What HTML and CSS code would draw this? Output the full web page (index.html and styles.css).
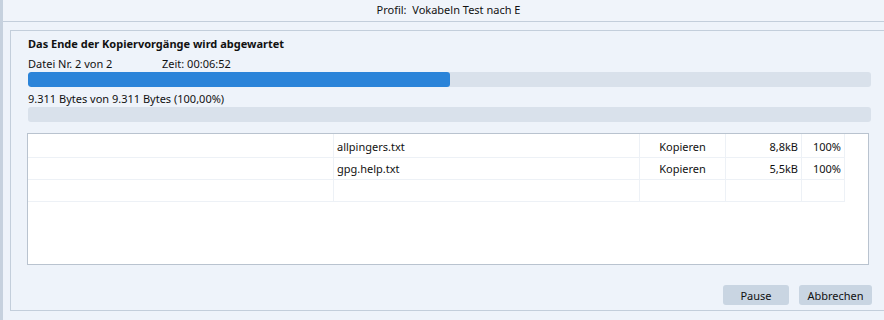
FILE: index.html
```html
<!DOCTYPE html>
<html lang="de">
<head>
    <meta charset="UTF-8">
    <title>Kopiervorgang</title>
    <link rel="stylesheet" href="styles.css">
</head>
<body>
    <div class="window">
        <div class="profile-bar">Profil:&nbsp; Vokabeln Test nach E</div>

        <div class="panel">
            <div class="title">Das Ende der Kopiervorgänge wird abgewartet</div>

            <div class="status-row">
                <span class="file-count">Datei Nr. 2 von 2</span>
                <span>Zeit: 00:06:52</span>
            </div>
            <div class="progress"><div class="progress-fill" style="width: 50%"></div></div>

            <div class="status-row">9.311 Bytes von 9.311 Bytes (100,00%)</div>
            <div class="progress"></div>

            <div class="file-list">
                <table>
                    <tr>
                        <td class="col-path"></td>
                        <td class="col-name">allpingers.txt</td>
                        <td class="col-action">Kopieren</td>
                        <td class="col-size">8,8kB</td>
                        <td class="col-pct">100%</td>
                    </tr>
                    <tr>
                        <td class="col-path"></td>
                        <td class="col-name">gpg.help.txt</td>
                        <td class="col-action">Kopieren</td>
                        <td class="col-size">5,5kB</td>
                        <td class="col-pct">100%</td>
                    </tr>
                    <tr>
                        <td class="col-path"></td>
                        <td class="col-name"></td>
                        <td class="col-action"></td>
                        <td class="col-size"></td>
                        <td class="col-pct"></td>
                    </tr>
                </table>
            </div>

            <div class="buttons">
                <button type="button">Pause</button>
                <button type="button">Abbrechen</button>
            </div>
        </div>
    </div>
</body>
</html>
```

FILE: styles.css
```css
body {
    margin: 0;
    font-family: "Noto Sans", "Open Sans", sans-serif;
    font-size: 11px;
    color: #111;
    background-color: #eef3fa;
}
.window {
    height: 320px;
    border-left: 3px solid #c6d1de;
    box-sizing: border-box;
}
.profile-bar {
    height: 21px;
    line-height: 20px;
    padding-left: 10px;
    text-align: center;
    background-color: #f0f4fa;
    border-bottom: 1px solid #c3cedb;
}
.panel {
    margin: 8px 0 0 7px;
    height: 281px;
    box-sizing: border-box;
    padding: 5px 13px 0 17px;
    border-top: 1px solid #c3cedb;
    border-left: 1px solid #c3cedb;
    border-bottom: 1px solid #c3cedb;
}
.title {
    font-weight: bold;
    line-height: 16px;
    margin-bottom: 4px;
}
.status-row {
    line-height: 16px;
    display: flex;
}
.file-count {
    width: 134px;
}
.progress {
    height: 15px;
    border-radius: 3px;
    background-color: #d9e1eb;
    overflow: hidden;
}
.progress-fill {
    height: 100%;
    background-color: #2b84d9;
    border-radius: 3px;
}
.progress + .status-row {
    margin-top: 4px;
}
.file-list {
    margin: 11px 2px 0 -1px;
    height: 132px;
    box-sizing: border-box;
    background: white;
    border: 1px solid #b9c3cf;
}
table {
    border-collapse: collapse;
    table-layout: fixed;
}
td {
    height: 21px;
    padding: 0 3px;
    border-right: 1px solid #edf1f6;
    border-bottom: 1px solid #edf1f6;
    white-space: nowrap;
}
tr:first-child td {
    height: 22px;
    padding-top: 1px;
}
.col-path { width: 299px; }
.col-name { width: 299px; }
.col-action { width: 79px; text-align: center; }
.col-size { width: 69px; text-align: right; }
.col-pct { width: 36px; text-align: right; }
.buttons {
    display: flex;
    justify-content: flex-end;
    gap: 10px;
    margin-top: 20px;
    margin-right: -1px;
}
button {
    font-family: inherit;
    font-size: 11px;
    color: #111;
    height: 20px;
    padding: 0;
    border: none;
    border-radius: 3px;
    background-color: #c9d5e2;
}
.buttons button:first-child {
    width: 66px;
}
.buttons button:last-child {
    width: 73px;
}
```
